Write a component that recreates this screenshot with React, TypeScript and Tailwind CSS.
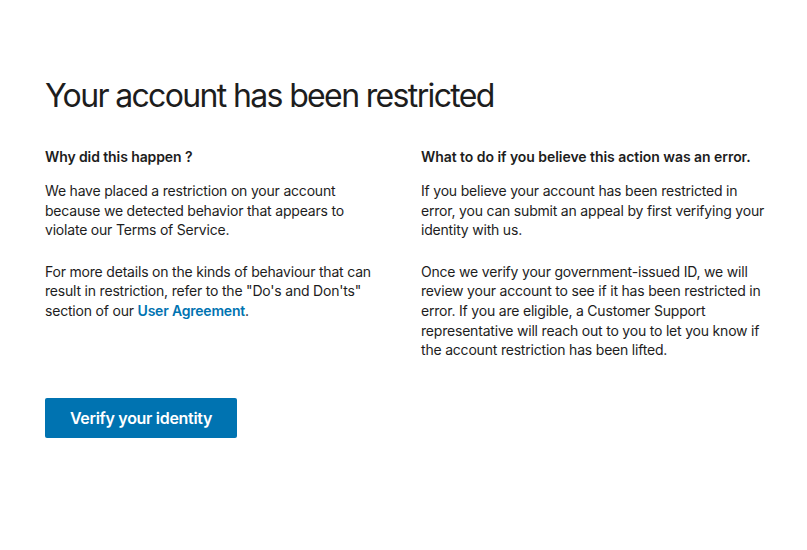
export default function App() {
  return (
    <div
      className="min-h-screen w-full bg-white text-[#1d1d1d]"
      style={{ fontFamily: "Inter, 'Noto Sans', sans-serif" }}
    >
      <div className="px-[45px] pt-[76px]">
        <h1 className="text-[32px] leading-[40px] font-normal tracking-[-1.65px]">
          Your account has been restricted
        </h1>

        <div className="mt-[31px] flex gap-[16px]">
          {/* Left column */}
          <div className="w-[360px] shrink-0">
            <h2 className="text-[14px] leading-[20px] font-semibold tracking-[-0.1px]">
              Why did this happen ?
            </h2>
            <p className="mt-[14px] w-[340px] text-[14px] leading-[1.4] tracking-[-0.2px]">
              We have placed a restriction on your account because we detected behavior that
              appears to violate our Terms of Service.
            </p>
            <p className="mt-[22px] w-[340px] text-[14px] leading-[1.4] tracking-[-0.2px]">
              For more details on the kinds of behaviour that can result in restriction, refer to
              the "Do's and Don'ts" section of our{" "}
              <a href="#" className="font-semibold text-[#0073b1]">
                User Agreement
              </a>
              .
            </p>
          </div>

          {/* Right column */}
          <div className="w-[360px] shrink-0">
            <h2 className="text-[14px] leading-[20px] font-semibold tracking-[-0.05px]">
              What to do if you believe this action was an error.
            </h2>
            <p className="mt-[14px] w-[350px] text-[14px] leading-[1.4] tracking-[-0.2px]">
              If you believe your account has been restricted in error, you can submit an appeal
              by first verifying your identity with us.
            </p>
            <p className="mt-[22px] w-[350px] text-[14px] leading-[1.4] tracking-[-0.2px]">
              Once we verify your government-issued ID, we will review your account to see if it
              has been restricted in error. If you are eligible, a Customer Support representative
              will reach out to you to let you know if the account restriction has been lifted.
            </p>
          </div>
        </div>

        <button className="mt-[38px] h-[40px] w-[192px] rounded-[2px] bg-[#0073b1] text-[16px] font-semibold tracking-[-0.3px] text-white">
          Verify your identity
        </button>
      </div>
    </div>
  );
}
